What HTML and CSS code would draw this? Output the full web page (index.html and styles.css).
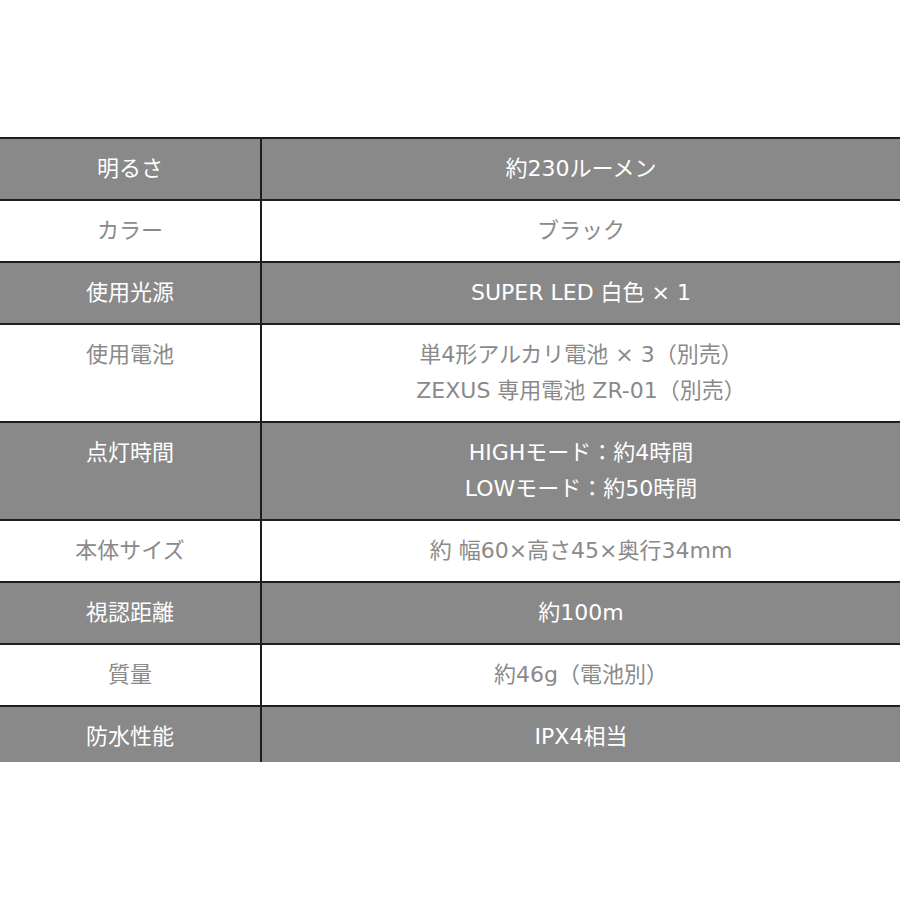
FILE: index.html
```html
<!DOCTYPE html>
<html lang="ja">
<head>
<meta charset="utf-8">
<link rel="stylesheet" href="styles.css">
</head>
<body>
<div class="spec-clip">
<table class="spec">
  <tr class="dark"><th>明るさ</th><td>約230ルーメン</td></tr>
  <tr class="light"><th>カラー</th><td>ブラック</td></tr>
  <tr class="dark"><th>使用光源</th><td>SUPER LED 白色 × 1</td></tr>
  <tr class="light"><th>使用電池</th><td>単4形アルカリ電池 × 3（別売）<br>ZEXUS 専用電池 ZR-01（別売）</td></tr>
  <tr class="dark"><th>点灯時間</th><td>HIGHモード：約4時間<br>LOWモード：約50時間</td></tr>
  <tr class="light"><th>本体サイズ</th><td>約 幅60×高さ45×奥行34mm</td></tr>
  <tr class="dark"><th>視認距離</th><td>約100m</td></tr>
  <tr class="light"><th>質量</th><td>約46g（電池別）</td></tr>
  <tr class="dark"><th>防水性能</th><td>IPX4相当</td></tr>
</table>
</div>
</body>
</html>
```
FILE: styles.css
```css
html, body {
  margin: 0;
  padding: 0;
  background: #ffffff;
}
body {
  font-family: "DejaVu Sans", "Noto Sans CJK JP", "Noto Sans", sans-serif;
}
.spec-clip {
  margin-top: 137px;
  height: 625px;
  overflow: hidden;
}
.spec {
  width: 900px;
  border-collapse: collapse;
  table-layout: fixed;
}
.spec th,
.spec td {
  border-top: 2px solid #1e1e1e;
  padding: 12px 0 12px;
  font-size: 22px;
  line-height: 36px;
  font-weight: 400;
  text-align: center;
  vertical-align: top;
}
.spec th {
  width: 260px;
  border-right: 2px solid #1e1e1e;
}
.spec .dark th,
.spec .dark td {
  background: #898989;
  color: #ffffff;
}
.spec .light th,
.spec .light td {
  background: #ffffff;
  color: #8a8a8a;
}
```
